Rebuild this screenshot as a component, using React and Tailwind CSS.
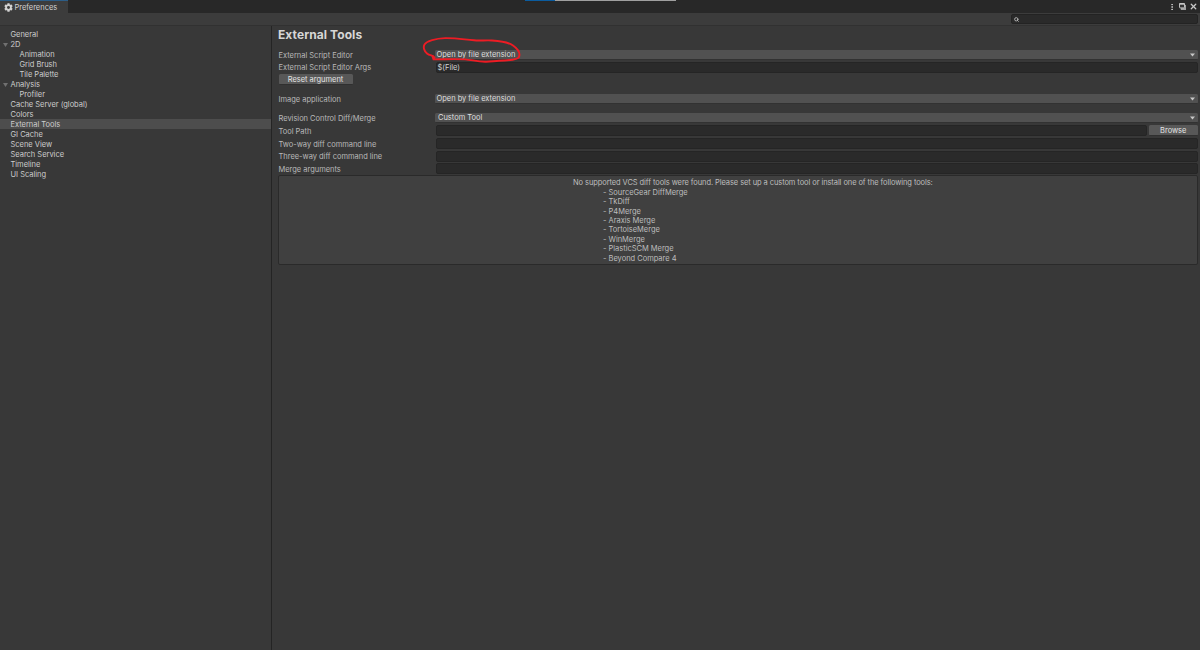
import { MoreVertical, Search, X } from 'lucide-react';

const categories = [
  { name: 'General' },
  { name: '2D', open: true },
  { name: 'Animation', child: true },
  { name: 'Grid Brush', child: true },
  { name: 'Tile Palette', child: true },
  { name: 'Analysis', open: true },
  { name: 'Profiler', child: true },
  { name: 'Cache Server (global)' },
  { name: 'Colors' },
  { name: 'External Tools', selected: true },
  { name: 'GI Cache' },
  { name: 'Scene View' },
  { name: 'Search Service' },
  { name: 'Timeline' },
  { name: 'UI Scaling' },
];

const diffTools = [
  'SourceGear DiffMerge',
  'TkDiff',
  'P4Merge',
  'Araxis Merge',
  'TortoiseMerge',
  'WinMerge',
  'PlasticSCM Merge',
  'Beyond Compare 4',
];

function GearIcon() {
  return (
    <svg width="9" height="9" viewBox="0 0 16 16" className="shrink-0">
      <g fill="#d2d2d2">
        <rect x="6" y="0.5" width="4" height="15" rx="0.6" />
        <rect x="6" y="0.5" width="4" height="15" rx="0.6" transform="rotate(60 8 8)" />
        <rect x="6" y="0.5" width="4" height="15" rx="0.6" transform="rotate(120 8 8)" />
        <circle cx="8" cy="8" r="5.8" />
      </g>
      <circle cx="8" cy="8" r="2.6" fill="#3c3c3c" />
    </svg>
  );
}

function RestoreIcon() {
  return (
    <svg width="7" height="7" viewBox="0 0 7 7">
      <path d="M1.8 1.9H7V7H1.8Z" fill="#a0a0a0" />
      <rect x="0.5" y="0.5" width="5" height="4.4" rx="0.5" fill="#333333" stroke="#bcbcbc" strokeWidth="1" />
      <path d="M0.4 0.9H5.6" stroke="#c8c8c8" strokeWidth="1.6" />
    </svg>
  );
}

function Row({ label, className = '', children }) {
  return (
    <div className={`flex items-center ${className}`}>
      <label className="w-[157px] shrink-0 pl-[0.5px] pt-[2px] text-[#b8b8b8]">{label}</label>
      {children}
    </div>
  );
}

function Dropdown({ value, className = 'pl-[1.5px]' }) {
  return (
    <div className={`mr-[0.5px] flex h-[10px] flex-1 items-center justify-between rounded-[1.5px] border-b border-[#323232] bg-[#515151] pt-[1px] pr-[3px] text-[#dedede] ${className}`}>
      <span>{value}</span>
      <svg width="5" height="4" viewBox="0 0 5 4">
        <path d="M0 0.5H5L2.5 3.5Z" fill="#c8c8c8" />
      </svg>
    </div>
  );
}

function TextField({ value }) {
  return (
    <div className="ml-px flex h-[11px] flex-1 items-center rounded-[2px] border border-[#252525] bg-[#2a2a2a] pl-[0.5px] pt-[1px] text-[#d2d2d2]">
      {value}
    </div>
  );
}

function Button({ children, className = '' }) {
  return (
    <button className={`flex h-[11px] items-center justify-center rounded-[1.5px] border-b border-[#303030] bg-[#585858] pt-[1.5px] text-[#e4e4e4] ${className}`}>
      {children}
    </button>
  );
}

function TitleBar() {
  return (
    <div className="relative flex h-[13px] items-stretch justify-between bg-[#282828]">
      <div className="flex w-[67.5px] items-center gap-[2px] border-t border-[#2c5d87] bg-[#3c3c3c] pl-[3.5px] pt-[1px] text-[#d2d2d2]">
        <GearIcon />
        <span className="pt-[1px]">Preferences</span>
      </div>
      <div className="absolute left-[525px] top-0 flex h-px w-[151px]">
        <div className="w-[30px] bg-[#0b5c9f]" />
        <div className="flex-1 bg-[#a0a0a0]" />
      </div>
      <div className="flex items-center gap-[3px] pr-[2px] text-[#c8c8c8]">
        <MoreVertical size={8} strokeWidth={3} />
        <RestoreIcon />
        <X size={9} strokeWidth={3.5} />
      </div>
    </div>
  );
}

function Sidebar() {
  return (
    <nav className="w-[272px] shrink-0 border-r border-[#242424] pt-[3px] text-[#cdcdcd]">
      {categories.map((item) => (
        <div
          key={item.name}
          className={`flex h-[10px] items-center pt-[1px] ${item.child ? 'pl-[19.5px]' : item.open ? 'pl-[3px]' : 'pl-[10.5px]'} ${item.selected ? 'bg-[#4d4d4d]' : ''}`}
        >
          {item.open && (
            <svg width="5" height="4" viewBox="0 0 5 4" className="mr-[2.5px]">
              <path d="M0 0H5L2.5 4Z" fill="#707070" />
            </svg>
          )}
          <span>{item.name}</span>
        </div>
      ))}
    </nav>
  );
}

export default function App() {
  return (
    <div className="relative flex h-[650px] w-[1200px] flex-col overflow-hidden bg-[#383838] font-['Inter','Liberation_Sans',sans-serif] text-[7.5px] leading-[10px] tracking-[-0.02px] whitespace-nowrap">
      <TitleBar />
      <div className="flex h-[13px] items-center justify-end border-b border-[#313131] bg-[#3c3c3c] pr-[2px]">
        <div className="flex h-[10px] w-[187px] items-center rounded-[2px] border border-[#232323] bg-[#2a2a2a] pl-[2px]">
          <Search size={5} strokeWidth={4} className="text-[#c4c4c4]" />
        </div>
      </div>

      <div className="flex min-h-0 flex-1">
        <Sidebar />
        <main className="min-w-0 flex-1 pl-[6px] pr-[2px]">
          <h1 className="mt-[1px] h-[16px] text-[12px] leading-[16px] font-bold tracking-[0.08px] text-[#d6d6d6]">External Tools</h1>

          <Row label="External Script Editor" className="mt-[6px] h-[11px]">
            <Dropdown value="Open by file extension" />
          </Row>
          <Row label="External Script Editor Args" className="mt-[1px] h-[12px]">
            <TextField value="$(File)" />
          </Row>
          <Button className="mt-[1px] ml-[0.5px] w-[74px]">Reset argument</Button>

          <Row label="Image application" className="mt-[8px] h-[12px]">
            <Dropdown value="Open by file extension" />
          </Row>

          <Row label="Revision Control Diff/Merge" className="mt-[7px] h-[11px]">
            <Dropdown value="Custom Tool" className="pl-[3px]" />
          </Row>
          <Row label="Tool Path" className="mt-[1px] h-[13px]">
            <TextField />
            <Button className="ml-[2px] mr-[0.5px] w-[48.5px]">Browse</Button>
          </Row>
          <Row label="Two-way diff command line" className="h-[13px]">
            <TextField />
          </Row>
          <Row label="Three-way diff command line" className="h-[12px]">
            <TextField />
          </Row>
          <Row label="Merge arguments" className="h-[13px]">
            <TextField />
          </Row>

          <div className="flex h-[90px] justify-center rounded-[2px] border border-[#2a2a2a] bg-[#404040] pt-[2.4px] text-[#bdbdbd]">
            <div className="w-[330px] leading-[9.4px]">
              <p className="tracking-[-0.085px]">No supported VCS diff tools were found. Please set up a custom tool or install one of the following tools:</p>
              {diffTools.map((tool) => (
                <p key={tool} className="pl-[30px]">- {tool}</p>
              ))}
            </div>
          </div>
        </main>
      </div>

      {/* hand-drawn marker around the script editor value */}
      <svg className="pointer-events-none absolute left-[418px] top-[32px]" width="110" height="36" viewBox="418 32 110 36" fill="none">
        <path
          d="M434.5 57.5C433.5 55 430 56 427 53.5C424 51 423 47 424.5 44.5C426.5 41 436 38.4 445 38.1C456 37.8 464 39.5 474 40.3C480 41 486 40 492 40.5C500 41 508 42 513 45.5C518 49 520.5 53 519 57C517.5 60 508 60.5 499 60.8C494 61 490 62 485 61.7C477 61.5 472 60 465 59.4C455 58.8 445 59.4 433.5 59.4L432.5 56.5"
          stroke="#ee1c24"
          strokeWidth="1.9"
          strokeLinecap="round"
          strokeLinejoin="round"
        />
      </svg>
    </div>
  );
}
